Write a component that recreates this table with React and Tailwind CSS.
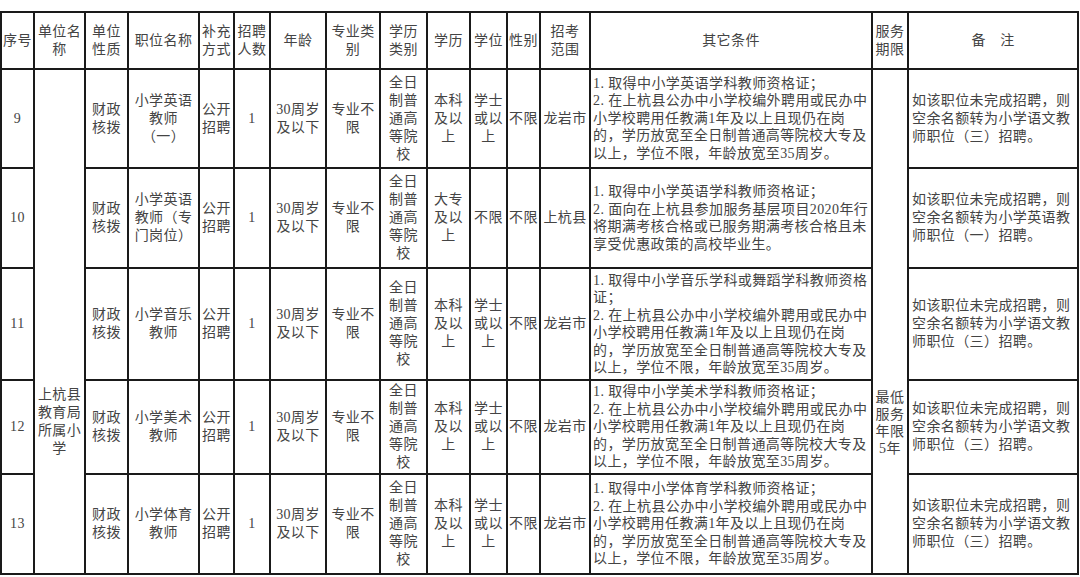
import React from "react";

const FONT = { fontFamily: "'Liberation Serif','Noto Sans CJK SC',serif" };

function Lines({ lines, className = "" }) {
  return (
    <div className={className}>
      {lines.map((l, i) => (
        <div key={i} className="whitespace-nowrap">{l}</div>
      ))}
    </div>
  );
}

function C({ lines, className = "" }) {
  return (
    <div className={"bg-white flex items-center justify-center text-center " + className}>
      <Lines lines={lines} />
    </div>
  );
}

const headers = [
  ["序号"],
  ["单位名", "称"],
  ["单位", "性质"],
  ["职位名称"],
  ["补充", "方式"],
  ["招聘", "人数"],
  ["年龄"],
  ["专业类", "别"],
  ["学历", "类别"],
  ["学历"],
  ["学位"],
  ["性别"],
  ["招考", "范围"],
  ["其它条件"],
  ["服务", "期限"],
  ["备　注"],
];

const common2 = [
  "2. 在上杭县公办中小学校编外聘用或民办中",
  "小学校聘用任教满1年及以上且现仍在岗",
  "的，学历放宽至全日制普通高等院校大专及",
  "以上，学位不限，年龄放宽至35周岁。",
];

const note3 = ["如该职位未完成招聘，则", "空余名额转为小学语文教", "师职位（三）招聘。"];

const rows = [
  {
    no: "9",
    pos: ["小学英语", "教师", "（一）"],
    edu: ["本科", "及以", "上"],
    deg: ["学士", "或以", "上"],
    area: "龙岩市",
    other: ["1. 取得中小学英语学科教师资格证；", ...common2],
    note: note3,
  },
  {
    no: "10",
    pos: ["小学英语", "教师（专", "门岗位）"],
    edu: ["大专", "及以", "上"],
    deg: ["不限"],
    area: "上杭县",
    other: [
      "1. 取得中小学英语学科教师资格证；",
      "2. 面向在上杭县参加服务基层项目2020年行",
      "将期满考核合格或已服务期满考核合格且未",
      "享受优惠政策的高校毕业生。",
    ],
    note: ["如该职位未完成招聘，则", "空余名额转为小学英语教", "师职位（一）招聘。"],
  },
  {
    no: "11",
    pos: ["小学音乐", "教师"],
    edu: ["本科", "及以", "上"],
    deg: ["学士", "或以", "上"],
    area: "龙岩市",
    other: ["1. 取得中小学音乐学科或舞蹈学科教师资格", "证；", ...common2],
    note: note3,
  },
  {
    no: "12",
    pos: ["小学美术", "教师"],
    edu: ["本科", "及以", "上"],
    deg: ["学士", "或以", "上"],
    area: "龙岩市",
    other: ["1. 取得中小学美术学科教师资格证；", ...common2],
    note: note3,
  },
  {
    no: "13",
    pos: ["小学体育", "教师"],
    edu: ["本科", "及以", "上"],
    deg: ["学士", "或以", "上"],
    area: "龙岩市",
    other: ["1. 取得中小学体育学科教师资格证；", ...common2],
    note: note3,
  },
];

export default function App() {
  return (
    <div className="w-[1080px] h-[577px] bg-white overflow-hidden pt-[11px]">
      <div
        style={FONT}
        className="grid w-[1079px] grid-cols-[31px_49px_41px_69px_33px_34px_54px_52px_45px_41px_35px_31px_48px_280px_34px_168px] grid-rows-[55px_97px_98px_110px_92px_98px] gap-[2px] bg-[#1a1a1a] p-[2px] text-[14px] leading-[18px] tracking-[0.4px] text-[#444]"
      >
        {headers.map((h, i) => (
          <C key={"h" + i} lines={h} />
        ))}
        {rows.map((r, ri) => (
          <React.Fragment key={r.no}>
            <C lines={[r.no]} />
            {ri === 0 && (
              <div className="row-span-5 bg-white flex flex-col items-center pt-[316px] text-center">
                <Lines lines={["上杭县", "教育局", "所属小", "学"]} />
              </div>
            )}
            <C lines={["财政", "核拨"]} />
            <C lines={r.pos} />
            <C lines={["公开", "招聘"]} />
            <C lines={["1"]} />
            <C lines={["30周岁", "及以下"]} />
            <C lines={["专业不", "限"]} />
            <C lines={["全日", "制普", "通高", "等院", "校"]} />
            <C lines={r.edu} />
            <C lines={r.deg} />
            <C lines={["不限"]} />
            <C lines={[r.area]} />
            <div className="bg-white flex items-center pl-[2px] leading-[17.5px]">
              <Lines lines={r.other} />
            </div>
            {ri === 0 && (
              <div className="row-span-5 bg-white flex flex-col items-center pt-[319px] text-center leading-[17px]">
                <Lines lines={["最低", "服务", "年限", "5年"]} />
              </div>
            )}
            <div className="bg-white flex items-center pl-[3px]">
              <Lines lines={r.note} />
            </div>
          </React.Fragment>
        ))}
      </div>
    </div>
  );
}
